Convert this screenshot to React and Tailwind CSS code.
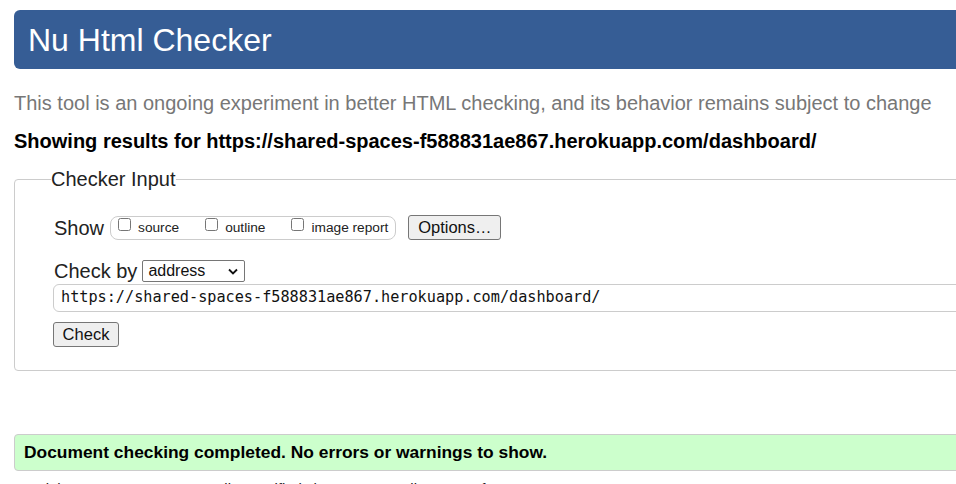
export default function App() {
  return (
    <div className="w-[956px] h-[484px] overflow-hidden bg-white font-['Liberation_Sans',Arial,sans-serif] text-[#000]">
      <div className="w-[1120px] pl-[14px] pt-[10px]">
        {/* Title bar */}
        <h1 className="h-[59px] flex items-center pl-[14px] bg-[#365d95] rounded-[6px] text-white text-[32px] leading-none">
          Nu Html Checker
        </h1>

        <p className="mt-[23px] text-[20px] leading-[23px] text-[#777] whitespace-nowrap">
          This tool is an ongoing experiment in better HTML checking, and its behavior remains subject to change
        </p>

        <p className="mt-[15px] text-[20px] leading-[23px] font-bold whitespace-nowrap">
          Showing results for https://shared-spaces-f588831ae867.herokuapp.com/dashboard/
        </p>

        {/* Checker input */}
        <fieldset className="mt-[15px] border border-[#ccc] rounded-[4px] pl-[36px] pb-[23px]">
          <legend className="text-[20px] leading-[22px] text-[#222]">Checker Input</legend>

          <div className="pl-[3px]">
            <div className="mt-[25px] flex items-center h-[25px]">
              <span className="text-[20px] leading-[22px] text-[#222]">Show</span>
              <div className="ml-[6px] flex items-start h-[24px] border border-[#ccc] rounded-[8px] pl-[7px] pr-[7px]">
                {[['source', 'mr-[26px]'], ['outline', 'mr-[26px]'], ['image report', '']].map(([label, gap]) => (
                  <label key={label} className={`flex items-start ${gap}`}>
                    <input type="checkbox" className="w-[13px] h-[13px] m-0 mt-[1px]" />
                    <span className="ml-[7px] text-[13.7px] leading-[22px] text-[#222]">{label}</span>
                  </label>
                ))}
              </div>
              <button className="ml-[12px] w-[93px] h-[25px] bg-[#efefef] border border-[#767676] rounded-[3px] text-[16.5px] text-[#111] leading-none">
                Options…
              </button>
            </div>

            <div className="mt-[20px] flex items-center h-[22px]">
              <span className="text-[20px] leading-[22px] text-[#222]">Check by</span>
              <div className="ml-[5px] w-[103px] h-[22px] border border-[#767676] rounded-[2px] flex items-center justify-between pl-[5px] pr-[6px]">
                <span className="text-[16px] leading-none text-[#111]">address</span>
                <svg width="10" height="7" viewBox="0 0 10 7" fill="none">
                  <path d="M1 1.5l4 4 4-4" stroke="#111" strokeWidth="1.8" />
                </svg>
              </div>
            </div>
          </div>

          <div className="mt-[2px] ml-[2px] h-[28px] border border-[#ccc] rounded-[6px] flex items-center pl-[7px] font-['DejaVu_Sans_Mono',monospace] text-[15.2px] leading-none text-[#111] whitespace-nowrap">
            https://shared-spaces-f588831ae867.herokuapp.com/dashboard/
          </div>

          <button className="mt-[10px] ml-[2px] w-[66px] h-[25px] bg-[#efefef] border border-[#767676] rounded-[3px] text-[16.5px] text-[#111] leading-none">
            Check
          </button>
        </fieldset>

        {/* Result */}
        <div className="mt-[63px] h-[37px] bg-[#ccffcc] border border-[#ccc] rounded-[4px] flex items-center pl-[9px]">
          <p className="text-[17.4px] font-bold leading-none whitespace-nowrap">
            Document checking completed. No errors or warnings to show.
          </p>
        </div>

        <p className="mt-[9px] text-[15px] leading-[18px] text-[#222] whitespace-nowrap">
          Used the HTML parser. Externally specified character encoding was utf-8.
        </p>
      </div>
    </div>
  );
}
